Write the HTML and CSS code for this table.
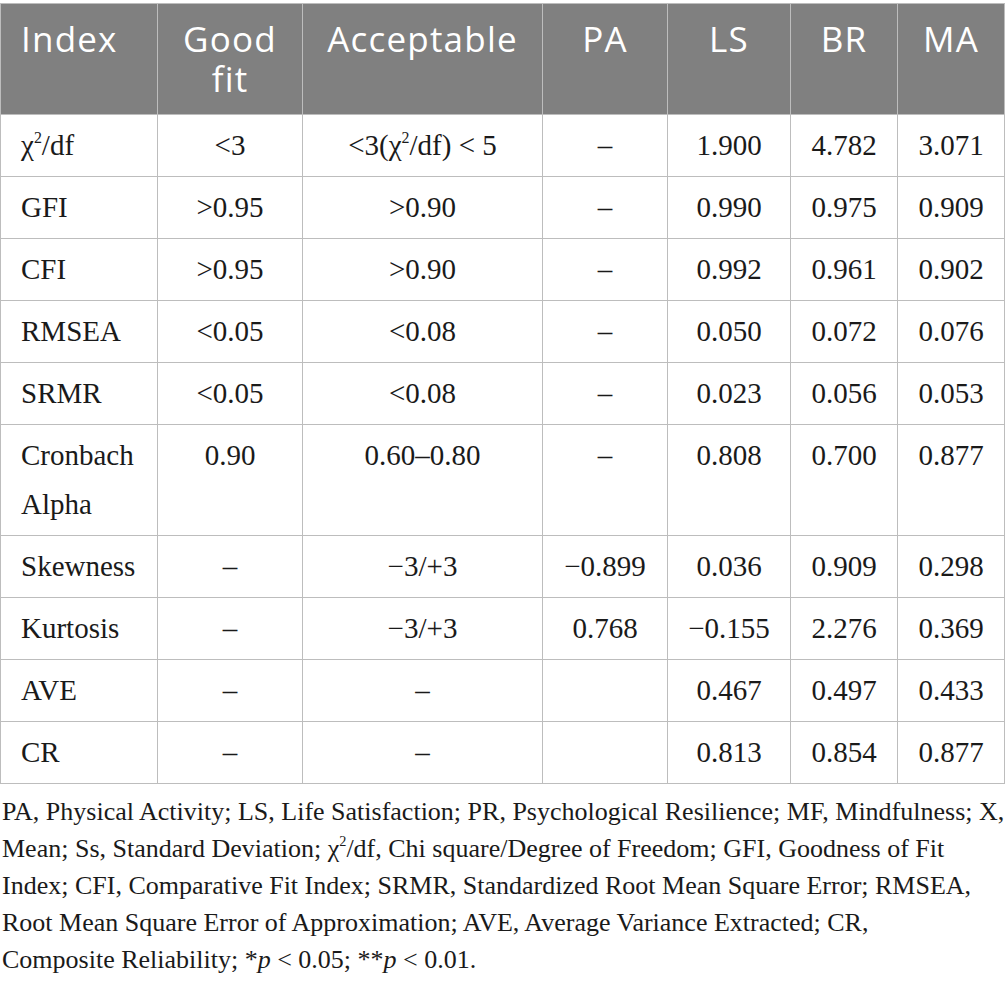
FILE: index.html
```html
<!DOCTYPE html>
<html lang="en">
<head>
<meta charset="utf-8">
<title>Fit indices</title>
<link rel="stylesheet" href="styles.css">
</head>
<body>
<div class="wrap">
<table class="fit">
  <colgroup>
    <col class="c1"><col class="c2"><col class="c3"><col class="c4"><col class="c5"><col class="c6"><col class="c7">
  </colgroup>
  <thead>
    <tr>
      <th class="left">Index</th>
      <th>Good<br>fit</th>
      <th>Acceptable</th>
      <th>PA</th>
      <th>LS</th>
      <th>BR</th>
      <th>MA</th>
    </tr>
  </thead>
  <tbody>
    <tr><td class="left">χ<sup>2</sup>/df</td><td>&lt;3</td><td>&lt;3(χ<sup>2</sup>/df) &lt; 5</td><td>–</td><td>1.900</td><td>4.782</td><td>3.071</td></tr>
    <tr><td class="left">GFI</td><td>&gt;0.95</td><td>&gt;0.90</td><td>–</td><td>0.990</td><td>0.975</td><td>0.909</td></tr>
    <tr><td class="left">CFI</td><td>&gt;0.95</td><td>&gt;0.90</td><td>–</td><td>0.992</td><td>0.961</td><td>0.902</td></tr>
    <tr><td class="left">RMSEA</td><td>&lt;0.05</td><td>&lt;0.08</td><td>–</td><td>0.050</td><td>0.072</td><td>0.076</td></tr>
    <tr><td class="left">SRMR</td><td>&lt;0.05</td><td>&lt;0.08</td><td>–</td><td>0.023</td><td>0.056</td><td>0.053</td></tr>
    <tr><td class="left">Cronbach<br>Alpha</td><td>0.90</td><td>0.60–0.80</td><td>–</td><td>0.808</td><td>0.700</td><td>0.877</td></tr>
    <tr><td class="left">Skewness</td><td>–</td><td>−3/+3</td><td>−0.899</td><td>0.036</td><td>0.909</td><td>0.298</td></tr>
    <tr><td class="left">Kurtosis</td><td>–</td><td>−3/+3</td><td>0.768</td><td>−0.155</td><td>2.276</td><td>0.369</td></tr>
    <tr><td class="left">AVE</td><td>–</td><td>–</td><td></td><td>0.467</td><td>0.497</td><td>0.433</td></tr>
    <tr><td class="left">CR</td><td>–</td><td>–</td><td></td><td>0.813</td><td>0.854</td><td>0.877</td></tr>
  </tbody>
</table>
<p class="note">PA, Physical Activity; LS, Life Satisfaction; PR, Psychological Resilience; MF, Mindfulness; X,<br>Mean; Ss, Standard Deviation; χ<sup>2</sup>/df, Chi square/Degree of Freedom; GFI, Goodness of Fit<br>Index; CFI, Comparative Fit Index; SRMR, Standardized Root Mean Square Error; RMSEA,<br>Root Mean Square Error of Approximation; AVE, Average Variance Extracted; CR,<br>Composite Reliability; *<i>p</i> &lt; 0.05; **<i>p</i> &lt; 0.01.</p>
</div>
</body>
</html>
```

FILE: styles.css
```css
html, body {
  margin: 0;
  padding: 0;
  background: #ffffff;
}

.wrap {
  padding-top: 3px;
}

.fit {
  border-collapse: collapse;
  width: 1004px;
  table-layout: fixed;
  font-family: "Liberation Serif", "Times New Roman", serif;
  color: #1a1a1a;
}

.c1 { width: 157px; }
.c2 { width: 145px; }
.c3 { width: 240px; }
.c4 { width: 125px; }
.c5 { width: 123px; }
.c6 { width: 107px; }
.c7 { width: 107px; }

.fit th,
.fit td {
  border: 1px solid #bdbdbd;
  text-align: center;
  vertical-align: top;
}

.fit th {
  background: #808080;
  color: #ffffff;
  font-family: "Open Sans", "Noto Sans", sans-serif;
  font-weight: 400;
  font-size: 35px;
  letter-spacing: 1.2px;
  line-height: 40px;
  padding: 15px 6px 15px 6px;
}

.fit td {
  font-size: 29px;
  line-height: 49px;
  padding: 6px 8px 6px 8px;
}

.fit .left {
  text-align: left;
  padding-left: 20px;
}

sup {
  font-size: 0.55em;
  line-height: 0;
  vertical-align: 0.75em;
}

.note {
  margin: 9px 0 0 2px;
  font-family: "Liberation Serif", "Times New Roman", serif;
  font-size: 26px;
  line-height: 37px;
  color: #1a1a1a;
  white-space: nowrap;
}
```
